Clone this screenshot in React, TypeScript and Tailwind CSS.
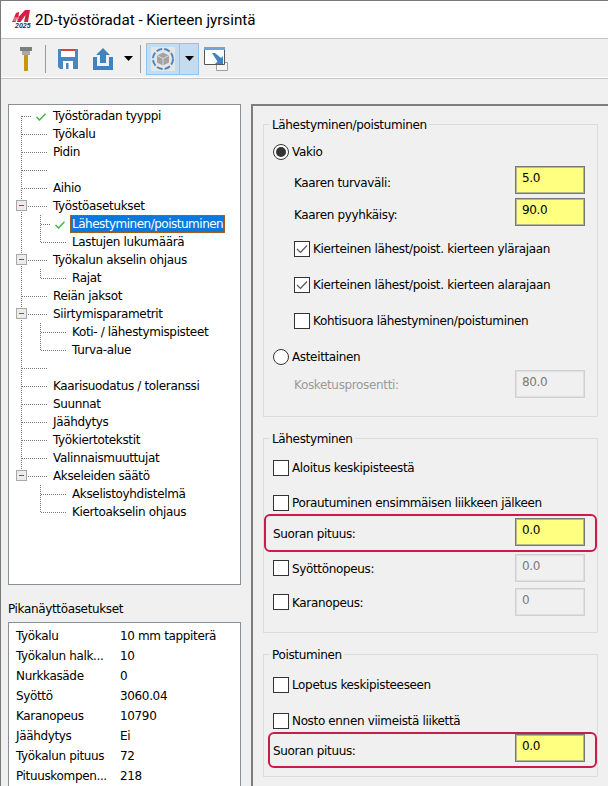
const treeRows = [
  { label: "Työstöradan tyyppi", level: 0, check: true },
  { label: "Työkalu", level: 0 },
  { label: "Pidin", level: 0 },
  { label: "", level: 0 },
  { label: "Aihio", level: 0 },
  { label: "Työstöasetukset", level: 0 },
  { label: "Lähestyminen/poistuminen", level: 1, check: true, selected: true },
  { label: "Lastujen lukumäärä", level: 1 },
  { label: "Työkalun akselin ohjaus", level: 0 },
  { label: "Rajat", level: 1 },
  { label: "Reiän jaksot", level: 0 },
  { label: "Siirtymisparametrit", level: 0 },
  { label: "Koti- / lähestymispisteet", level: 1 },
  { label: "Turva-alue", level: 1 },
  { label: "", level: 0 },
  { label: "Kaarisuodatus / toleranssi", level: 0 },
  { label: "Suunnat", level: 0 },
  { label: "Jäähdytys", level: 0 },
  { label: "Työkiertotekstit", level: 0 },
  { label: "Valinnaismuuttujat", level: 0 },
  { label: "Akseleiden säätö", level: 0 },
  { label: "Akselistoyhdistelmä", level: 1 },
  { label: "Kiertoakselin ohjaus", level: 1 },
]

const quickRows = [
  ["Työkalu", "10 mm tappiterä"],
  ["Työkalun halk...", "10"],
  ["Nurkkasäde", "0"],
  ["Syöttö", "3060.04"],
  ["Karanopeus", "10790"],
  ["Jäähdytys", "Ei"],
  ["Työkalun pituus", "72"],
  ["Pituuskompen...", "218"],
]

// row index -> y of the row centre inside the tree box
const rowY = (i: number) => 11 + i * 18

const TreeLines = () => {
  const dots = "#777777"
  const parents = [5, 8, 11, 20]
  return (
    <svg className="absolute left-0 top-0" width="231" height="479" fill="none" stroke={dots} strokeDasharray="1 1" shapeRendering="crispEdges">
      <path d={`M12.5 ${rowY(0)}V${rowY(20)}`} />
      {treeRows.map((r, i) =>
        r.level === 0 ? (
          <path key={i} d={`M13 ${rowY(i) + 0.5}H${r.check ? 23 : 39}`} />
        ) : (
          <path key={i} d={`M32 ${rowY(i) + 0.5}H${r.check ? 42 : 58}`} />
        )
      )}
      <path d={`M31.5 ${rowY(5) + 9}V${rowY(7)}M31.5 ${rowY(8) + 9}V${rowY(9)}M31.5 ${rowY(11) + 9}V${rowY(13)}M31.5 ${rowY(20) + 9}V${rowY(22)}`} />
      {parents.map((p) => (
        <g key={p} strokeDasharray="none">
          <rect x="7.5" y={rowY(p) - 5.5} width="10" height="10" fill="#ececec" stroke="#a8a8a8" />
          <path d={`M10 ${rowY(p) - 0.5}H15`} stroke="#3a62b0" />
        </g>
      ))}
    </svg>
  )
}

const GreenCheck = () => (
  <svg width="10" height="8" viewBox="0 0 10 8" fill="none" stroke="#3fb54a" strokeWidth="1.5">
    <path d="M0.5 4L3.5 7L9.5 0.8" />
  </svg>
)

const Tree = () => (
  <div className="relative h-[481px] w-[233px] border border-[#8a8f94] bg-white pt-[2px]">
    <TreeLines />
    {treeRows.map((r, i) => (
      <div key={i} className={`relative flex h-[18px] items-center ${r.level === 0 ? "pl-[44px]" : "pl-[63px]"}`}>
        {r.check && (
          <span className={`absolute top-[6px] ${r.level === 0 ? "left-[27px]" : "left-[46px]"}`}>
            <GreenCheck />
          </span>
        )}
        {r.selected ? (
          <span className="-ml-[2px] border border-dotted border-[#a8651f] bg-[#0a78dc] px-[1px] leading-[16px] tracking-[-0.5px] text-white">{r.label}</span>
        ) : (
          <span>{r.label}</span>
        )}
      </div>
    ))}
  </div>
)

const QuickView = () => (
  <div className="mt-[16px]">
    <div className="h-[21px] leading-[16px]">Pikanäyttöasetukset</div>
    <div className="h-[200px] w-[233px] border border-[#8a8f94] bg-white pl-[7px] pt-[3px]">
      {quickRows.map(([k, v]) => (
        <div key={k} className="flex h-[20px] items-center">
          <span className="w-[104px] shrink-0">{k}</span>
          <span>{v}</span>
        </div>
      ))}
    </div>
  </div>
)

const Check = ({ on }: { on?: boolean }) => (
  <span className="flex h-[16px] w-[16px] shrink-0 items-center justify-center border border-[#333333] bg-white">
    {on && (
      <svg width="12" height="10" viewBox="0 0 12 10" fill="none" stroke="#555555" strokeWidth="1.2">
        <path d="M1 5L4.5 8.5L11 1.5" />
      </svg>
    )}
  </span>
)

const Radio = ({ on }: { on?: boolean }) => (
  <span className="flex h-[16px] w-[16px] shrink-0 items-center justify-center rounded-full border border-[#333333] bg-white">
    {on && <span className="h-[10px] w-[10px] rounded-full bg-[#333333]" />}
  </span>
)

const Field = ({ value, off }: { value: string; off?: boolean }) => (
  <div className={`h-[28px] w-[70px] shrink-0 border pl-[6px] pt-[4px] leading-[14px] ${off ? "border-[#d0d0d0] text-[#7a7a7a] shadow-[inset_0_0_0_1px_#e0e0e0]" : "border-[#777777] bg-[#ffff80] shadow-[inset_0_0_0_1px_#b8b890]"}`}>
    {value}
  </div>
)

const CheckRow = ({ label, on, y, inset }: { label: string; on?: boolean; y: string; inset?: boolean }) => (
  <div className={`flex h-[18px] items-center gap-[3px] ${y} ${inset ? "pl-[30px]" : "pl-[9px]"}`}>
    <Check on={on} />
    <span>{label}</span>
  </div>
)

const FieldRow = ({ label, value, y, off }: { label: string; value: string; y: string; off?: boolean }) => (
  <div className={`flex h-[28px] items-center justify-between pl-[30px] pr-[12px] ${y}`}>
    <span className={off ? "pt-[2px] text-[#9a9a9a]" : "pt-[6px]"}>{label}</span>
    <Field value={value} off={off} />
  </div>
)

const Group = ({ title, h, children }: { title: string; h: string; children: React.ReactNode }) => (
  <div className={`relative w-[335px] border border-[#dcdcdc] ${h}`}>
    <span className="absolute -top-[8px] left-[6px] bg-[#f0f0f0] px-[2px] leading-[16px]">{title}</span>
    {children}
  </div>
)

const CheckFieldRow = ({ label, value, y }: { label: string; value: string; y: string }) => (
  <div className={`flex h-[28px] items-center justify-between pl-[9px] pr-[12px] ${y}`}>
    <div className="flex items-center gap-[3px]">
      <Check />
      <span className="pt-[1px]">{label}</span>
    </div>
    <Field value={value} off />
  </div>
)

const RedRow = ({ cls, labelPad, label }: { cls: string; labelPad: string; label: string }) => (
  <div className={`flex items-center justify-between rounded-[6px] border-2 border-[#cc1a4a] pb-[4px] pr-[10px] ${cls}`}>
    <span className={labelPad}>{label}</span>
    <Field value="0.0" />
  </div>
)

const Settings = () => (
  <div className="h-[700px] w-[380px] border-l-2 border-t-2 border-[#7e7e7e] pl-[10px] pt-[18px]">
    <Group title="Lähestyminen/poistuminen" h="h-[293px]">
      <div className="mt-[18px] flex h-[18px] items-center gap-[3px] pl-[9px]">
        <Radio on />
        <span>Vakio</span>
      </div>
      <FieldRow label="Kaaren turvaväli:" value="5.0" y="mt-[5px]" />
      <FieldRow label="Kaaren pyyhkäisy:" value="90.0" y="mt-[4px]" />
      <CheckRow label="Kierteinen lähest/poist. kierteen ylärajaan" on inset y="mt-[14px]" />
      <CheckRow label="Kierteinen lähest/poist. kierteen alarajaan" on inset y="mt-[18px]" />
      <CheckRow label="Kohtisuora lähestyminen/poistuminen" inset y="mt-[18px]" />
      <div className="mt-[18px] flex h-[18px] items-center gap-[3px] pl-[9px]">
        <Radio />
        <span>Asteittainen</span>
      </div>
      <FieldRow label="Kosketusprosentti:" value="80.0" y="mt-[4px]" off />
    </Group>
    <div className="h-[21px]" />
    <Group title="Lähestyminen" h="h-[195px]">
      <CheckRow label="Aloitus keskipisteestä" y="mt-[20px]" />
      <CheckRow label="Porautuminen ensimmäisen liikkeen jälkeen" y="mt-[17px]" />
      <RedRow cls="mt-[2px] h-[38px] pl-[7px] pt-[2px]" labelPad="pt-[4px]" label="Suoran pituus:" />
      <CheckFieldRow label="Syöttönopeus:" value="0.0" y="mt-[2px]" />
      <CheckFieldRow label="Karanopeus:" value="0" y="mt-[6px]" />
    </Group>
    <div className="h-[21px]" />
    <Group title="Poistuminen" h="h-[123px]">
      <CheckRow label="Lopetus keskipisteeseen" y="mt-[21px]" />
      <CheckRow label="Nosto ennen viimeistä liikettä" y="mt-[18px]" />
      <RedRow cls="ml-[4px] mt-[2px] h-[36px] pl-[3px]" labelPad="pt-[6px]" label="Suoran pituus:" />
    </Group>
  </div>
)

const Caret = () => (
  <svg width="9" height="5" viewBox="0 0 9 5">
    <path d="M0 0H9L4.5 5Z" fill="#000000" />
  </svg>
)

const Separator = () => <div className="h-[28px] w-[1px] bg-[#9a9a9a]" />

const Toolbar = () => (
  <div className="flex h-[41px] items-center border-b border-t border-[#c4c4c4] bg-[#f0f0f0] pl-[19px] shadow-[inset_0_-1px_0_#ffffff]">
    <svg width="12" height="24" viewBox="0 0 12 24">
      <path d="M0 0H12V4H0Z" fill="#7e7e7e" />
      <path d="M2 4H10V8H2Z" fill="#a8a8a8" />
      <path d="M4 8H8V24H4Z" fill="#c9960f" />
    </svg>
    <div className="ml-[13px]"><Separator /></div>
    <svg className="ml-[12px]" width="20" height="20" viewBox="0 0 20 20">
      <path d="M0 0H20V20H2L0 18Z" fill="#4a86c0" />
      <path d="M3 0H17V2H3Z" fill="#d9432f" />
      <path d="M3 2H17V8H3Z" fill="#ffffff" />
      <path d="M5 12H15V20H5Z" fill="#ffffff" />
      <path d="M8 14H10.5V20H8Z" fill="#4a86c0" />
    </svg>
    <svg className="ml-[15px]" width="20" height="22" viewBox="0 0 20 22">
      <path d="M10 0L17 7H13V15H7V7H3Z" fill="#3f83c1" />
      <path d="M0 9H4V18H16V9H20V22H0Z" fill="#3f83c1" />
    </svg>
    <div className="ml-[11px]"><Caret /></div>
    <div className="ml-[7px]"><Separator /></div>
    <div className="ml-[5px] flex h-[32px] items-stretch border border-[#8fc4f0] bg-[#c2dcf2]">
      <div className="flex w-[33px] items-center justify-center border-r border-[#8fc4f0]">
        <div className="flex h-[24px] w-[24px] items-center justify-center bg-[#e6e6e6]">
          <svg width="24" height="24" viewBox="0 0 24 24" fill="none">
            <circle cx="12" cy="12" r="10" stroke="#4a86c0" strokeWidth="2" strokeDasharray="6 2" />
            <path d="M12 5.5L18 8.5V15.5L12 18.5L6 15.5V8.5Z" fill="#a3a3a3" />
            <path d="M6 8.5L12 11.5L18 8.5M12 11.5V18.5" stroke="#e6e6e6" strokeWidth="0.8" />
          </svg>
        </div>
      </div>
      <div className="flex w-[18px] items-center justify-center"><Caret /></div>
    </div>
    <svg className="ml-[5px]" width="24" height="24" viewBox="0 0 24 24">
      <path d="M12.5 15.5H23.5V23.5H12.5Z" fill="#f4f4f4" stroke="#a0a0a0" />
      <path d="M0.5 2.5H20.5V17.5H0.5Z" fill="#ffffff" stroke="#555555" />
      <path d="M0 0H21V3H0Z" fill="#6aa8dc" />
      <path d="M8 6L11 6L17 11L19 9V17H11L13.5 14.5Z" fill="#3f83c1" />
    </svg>
  </div>
)

const Logo = () => (
  <div className="relative h-[21px] w-[20px]">
    <svg className="absolute left-[1px] top-0" width="18" height="12" viewBox="0 0 18 12">
      <path d="M0 12L4 3L7 2L6.5 7L13 0H18L16 12H12L13.5 5L8.5 12H5L5.5 7.5L3.5 12Z" fill="#d21f45" />
      <path d="M0 8H7M0 10H6" stroke="#ffffff" strokeWidth="0.7" />
    </svg>
    <span className="absolute left-[4px] top-[12px] text-[7px] font-bold italic leading-[8px] tracking-normal text-[#333333] [font-family:'Liberation_Sans',sans-serif]">2025</span>
  </div>
)

export default function App() {
  return (
    <div className="h-[786px] w-[608px] overflow-hidden border-l border-t border-[#7a7a7a] bg-[#f0f0f0] text-[12px] tracking-[-0.35px] text-black [font-family:'DejaVu_Sans',sans-serif]">
      <div className="flex h-[37px] items-center gap-[4px] bg-white pl-[10px] pt-[2px]">
        <Logo />
        <span className="text-[15.2px] tracking-normal [font-family:'Roboto',sans-serif]">2D-työstöradat - Kierteen jyrsintä</span>
      </div>
      <Toolbar />
      <div className="flex pl-[7px] pt-[25px]">
        <div className="w-[243px] shrink-0">
          <Tree />
          <QuickView />
        </div>
        <Settings />
      </div>
    </div>
  )
}
